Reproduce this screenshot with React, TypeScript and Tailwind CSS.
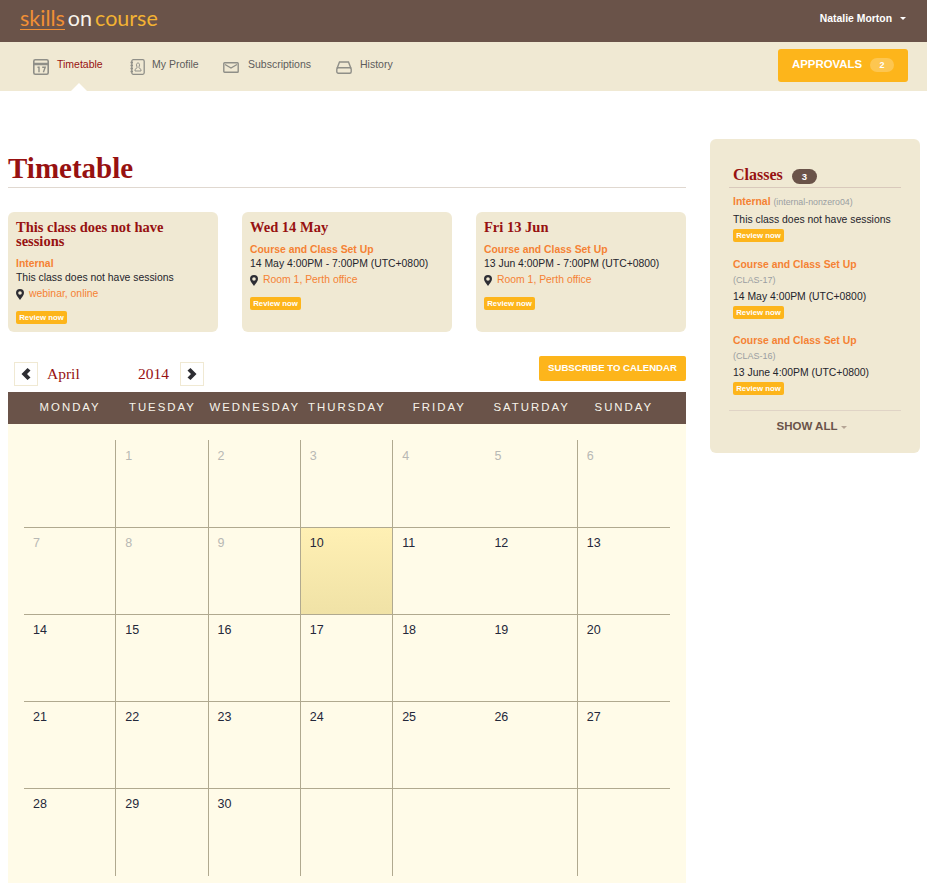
import React from 'react';

const serif = { fontFamily: '"Liberation Serif", serif' };

const CalendarIcon = () => (
  <svg width="16" height="16" viewBox="0 0 16 16" fill="none" stroke="#8f8f88" strokeWidth="1.6">
    <rect x="0.8" y="0.8" width="14.400" height="14.400" rx="1.500" />
    <path d="M1 5h14" strokeWidth="2.500" />
    <path d="M4.500 8.200h1.500v5M9.200 8.200h3l-1.800 5" strokeWidth="1.400" />
  </svg>
);

const ProfileIcon = () => (
  <svg width="15" height="16" viewBox="0 0 15 16" fill="none" stroke="#8f8f88" strokeWidth="1.300">
    <rect x="1.800" y="0.700" width="12.400" height="14.600" rx="1.500" />
    <path d="M0.500 3.500h2.500M0.500 6.500h2.500M0.500 9.500h2.500M0.500 12.500h2.500" />
    <path d="M8 4c1 0 1.500 0.800 1.500 1.800S9 8 8.800 8.500l2.200 2V12H5v-1.500l2.200-2C7 8 6.500 6.800 6.500 5.800S7 4 8 4z" strokeWidth="1" />
  </svg>
);

const MailIcon = () => (
  <svg width="16" height="11" viewBox="0 0 16 11" fill="none" stroke="#8f8f88" strokeWidth="1.400">
    <rect x="0.800" y="0.800" width="14.400" height="9.400" rx="0.800" />
    <path d="M2 2.500 8 6l6-3.500" />
  </svg>
);

const TrayIcon = () => (
  <svg width="16" height="13" viewBox="0 0 16 13" fill="none" stroke="#8f8f88" strokeWidth="1.400">
    <path d="M1 7.500 3.500 1h9L15 7.500" />
    <rect x="0.800" y="6.800" width="14.400" height="5.500" rx="1.500" />
  </svg>
);

const PinIcon = () => (
  <svg width="8" height="11" viewBox="0 0 8 11" className="mr-[5px] shrink-0">
    <path
      fillRule="evenodd"
      d="M4 0a4 4 0 0 1 4 4c0 2.300-2.500 4.800-4 7C2.500 8.800 0 6.300 0 4a4 4 0 0 1 4-4zm0 2.200a1.800 1.800 0 1 0 0 3.600 1.800 1.800 0 0 0 0-3.600z"
      fill="#2d2d33"
    />
  </svg>
);

const ReviewButton = ({ className = '' }: { className?: string }) => (
  <span className={`block w-[51px] h-[13px] rounded-[2px] bg-[#fdb51b] text-white text-[7.800px] leading-[13px] font-bold text-center ${className}`}>
    Review now
  </span>
);

const SessionCard = ({ title, name, when, place }: { title: React.ReactNode; name: string; when: string; place: string }) => (
  <div className="w-[210px] h-[120px] rounded-md bg-[#f0e9d3] px-2 pt-[8px]">
    <h3 style={serif} className="text-[#971111] text-[14.500px] leading-[14px] font-bold">{title}</h3>
    <div className="mt-[9px] text-[#f58233] text-[10.400px] leading-[14px] font-bold">{name}</div>
    <div className="text-[#24242c] text-[10.400px] leading-[14px]">{when}</div>
    <div className="flex items-center h-[18px] text-[#f58233] text-[10.400px]">
      <PinIcon />
      {place}
    </div>
    <ReviewButton className="mt-[8px]" />
  </div>
);

const weekDays = ['MONDAY', 'TUESDAY', 'WEDNESDAY', 'THURSDAY', 'FRIDAY', 'SATURDAY', 'SUNDAY'];

const days: (number | null)[] = [
  null, 1, 2, 3, 4, 5, 6,
  7, 8, 9, 10, 11, 12, 13,
  14, 15, 16, 17, 18, 19, 20,
  21, 22, 23, 24, 25, 26, 27,
  28, 29, 30, null, null, null, null,
];

const navItems = [
  { label: 'Timetable', icon: <CalendarIcon />, active: true, w: 'w-[97px]', col: 'w-[24px]' },
  { label: 'My Profile', icon: <ProfileIcon />, active: false, w: 'w-[93px]', col: 'w-[22px]' },
  { label: 'Subscriptions', icon: <MailIcon />, active: false, w: 'w-[113px]', col: 'w-[25px]' },
  { label: 'History', icon: <TrayIcon />, active: false, w: 'w-[70px]', col: 'w-[24px]' },
];

const Calendar = () => (
  <div>
    <div className="h-[32px] bg-[#6a5349] grid grid-cols-7 px-4 text-[#f7f3ea] text-[11.400px] tracking-[2px] leading-[30px] text-center">
      {weekDays.map((d) => (
        <div key={d} className="whitespace-nowrap">{d}</div>
      ))}
    </div>
    <div className="h-[459px] bg-[#fffbe8] px-4 pt-4">
      <div className="grid grid-cols-7 grid-rows-[87px_87px_87px_87px_88px]">
        {days.map((d, i) => {
          const isToday = d === 10;
          const faded = d !== null && d < 10;
          // the Friday/Saturday divider is not drawn in this layout
          const hasRight = i % 7 !== 6 && i % 7 !== 4;
          return (
            <div
              key={i}
              className={`pl-[9px] text-[12.500px] leading-[16px] border-[#b0a98f] ${hasRight ? 'border-r' : ''} ${i >= 7 ? 'border-t pt-[7px]' : 'pt-[8px]'} ${
                faded ? 'text-[#b8b8b4]' : 'text-[#24283a]'
              } ${isToday ? 'bg-gradient-to-b from-[#fff0b4] to-[#f0e2a6]' : ''}`}
            >
              {d}
            </div>
          );
        })}
      </div>
    </div>
  </div>
);

const ClassItem = ({ name, code, when, inline, mb }: { name: string; code: string; when: string; inline?: boolean; mb: string }) => (
  <div className={mb}>
    {inline ? (
      <div className="h-[18px] leading-[16px] text-[10.400px]">
        <span className="text-[#f58233] font-bold">{name}</span>{' '}
        <span className="text-[#9a9ea2] text-[8.800px]">{code}</span>
      </div>
    ) : (
      <>
        <div className="h-[16px] leading-[16px] text-[#f58233] text-[10.400px] font-bold">{name}</div>
        <div className="h-[16px] leading-[14px] text-[#9a9ea2] text-[9px]">{code}</div>
      </>
    )}
    <div className="h-[16px] leading-[15px] text-[#24242c] text-[10.400px]">{when}</div>
    <ReviewButton className="mt-[1px]" />
  </div>
);

export default function App() {
  return (
    <div style={{ fontFamily: '"Liberation Sans", Arial, sans-serif' }} className="w-[927px] h-[893px] bg-white overflow-hidden">
      <header className="h-[42px] bg-[#6a5349] flex items-center justify-between pl-5 pr-[21px]">
        <div style={{ fontFamily: 'Lato, sans-serif' }} className="flex items-baseline text-[21.500px] leading-[24px] font-normal -mt-[7px]">
          <span className="text-[#f08f35] border-b border-[#f08f35] leading-[21px]">skills</span>
          <span className="text-[#f8f4ec] ml-[3px]">on</span>
          <span className="text-[#f2b233] ml-[3px]">course</span>
        </div>
        <div className="flex items-center text-white text-[10.400px] font-bold -mt-[4px]">
          Natalie Morton
          <span className="ml-[8px] w-0 h-0 border-x-[3px] border-x-transparent border-t-[3px] border-t-white" />
        </div>
      </header>

      <nav className="relative h-[49px] bg-[#f0e9d3] flex pl-[33px] pr-[19px]">
        {navItems.map((item) => (
          <div key={item.label} className={`${item.w} flex items-start pt-[17px]`}>
            <span className={`${item.col} h-4 flex items-center shrink-0`}>{item.icon}</span>
            <span className={`text-[10.500px] leading-[12px] -mt-[1px] ${item.active ? 'text-[#971111]' : 'text-[#5d5c5c]'}`}>{item.label}</span>
          </div>
        ))}
        <div className="ml-auto mt-[7px] w-[130px] h-[33px] rounded-[3px] bg-[#fdb51b] flex items-center pl-[14px] pb-[2px] text-white text-[11.400px] font-bold">
          APPROVALS
          <span className="ml-[8px] w-6 h-[14px] rounded-full bg-[#fdc650] text-[9px] leading-[14px] text-center">2</span>
        </div>
        <span className="absolute left-[71px] bottom-0 w-0 h-0 border-x-[8px] border-x-transparent border-b-[8px] border-b-white" />
      </nav>

      <main className="flex pl-2 pr-[7px]">
        <div className="w-[678px] pt-[60px]">
          <h1 style={serif} className="text-[#971111] text-[29px] leading-[34px] font-bold h-[37px] border-b border-[#e0d8d0]">Timetable</h1>
          <div className="flex justify-between mt-[24px] gap-6">
            <SessionCard title={<>This class does not have<br />sessions</>} name="Internal" when="This class does not have sessions" place="webinar, online" />
            <SessionCard title="Wed 14 May" name="Course and Class Set Up" when="14 May 4:00PM - 7:00PM (UTC+0800)" place="Room 1, Perth office" />
            <SessionCard title="Fri 13 Jun" name="Course and Class Set Up" when="13 Jun 4:00PM - 7:00PM (UTC+0800)" place="Room 1, Perth office" />
          </div>
          <div className="flex justify-between mt-[24px] h-[36px]">
            <div style={serif} className="flex items-start pl-[6px] pt-[6px] text-[#971111] text-[15.500px] leading-[24px]">
              <span className="w-[24px] h-[24px] border border-[#f0e9d3] flex items-center justify-center text-[#2d2d33]">
                <svg width="10" height="12" viewBox="0 0 10 12"><path d="M6.500 0 .5 6l6 6 3-2.500L6 6l3.500-3.500z" fill="currentColor" /></svg>
              </span>
              <span className="ml-[9px] w-[91px]">April</span>
              <span className="w-[42px]">2014</span>
              <span className="w-[24px] h-[24px] border border-[#f0e9d3] flex items-center justify-center text-[#2d2d33]">
                <svg width="10" height="12" viewBox="0 0 10 12"><path d="M3.500 0l6 6-6 6-3-2.500L4 6 .5 2.500z" fill="currentColor" /></svg>
              </span>
            </div>
            <div className="w-[147px] h-[25px] rounded-[2px] bg-[#fdb51b] text-white text-[9.600px] font-bold leading-[24px] text-center">SUBSCRIBE TO CALENDAR</div>
          </div>
          <Calendar />
        </div>

        <aside className="ml-6 mt-[48px] w-[210px] h-[314px] rounded-md bg-[#f0e9d3] px-[19px] pt-[24px]">
          <div className="flex items-center h-[25px] border-b border-[#d9c9bb] pl-1">
            <span style={serif} className="text-[#971111] text-[16px] font-bold leading-[22px]">Classes</span>
            <span className="ml-[9px] mt-[3px] w-[25px] h-[15px] rounded-full bg-[#6a5349] text-white text-[9.500px] font-bold leading-[15px] text-center">3</span>
          </div>
          <div className="pl-1 pt-[6px]">
            <ClassItem inline mb="mb-[15px]" name="Internal" code="(internal-nonzero04)" when="This class does not have sessions" />
            <ClassItem mb="mb-[14px]" name="Course and Class Set Up" code="(CLAS-17)" when="14 May 4:00PM (UTC+0800)" />
            <ClassItem mb="mb-[15px]" name="Course and Class Set Up" code="(CLAS-16)" when="13 June 4:00PM (UTC+0800)" />
          </div>
          <div className="flex items-center justify-center h-[33px] pr-[6px] border-t border-[#e0d4c6] text-[#6a5349] text-[11.500px] font-bold">
            SHOW ALL
            <span className="ml-[4px] mt-[1px] w-0 h-0 border-x-[3px] border-x-transparent border-t-[3px] border-t-[#b5a595]" />
          </div>
        </aside>
      </main>
    </div>
  );
}
